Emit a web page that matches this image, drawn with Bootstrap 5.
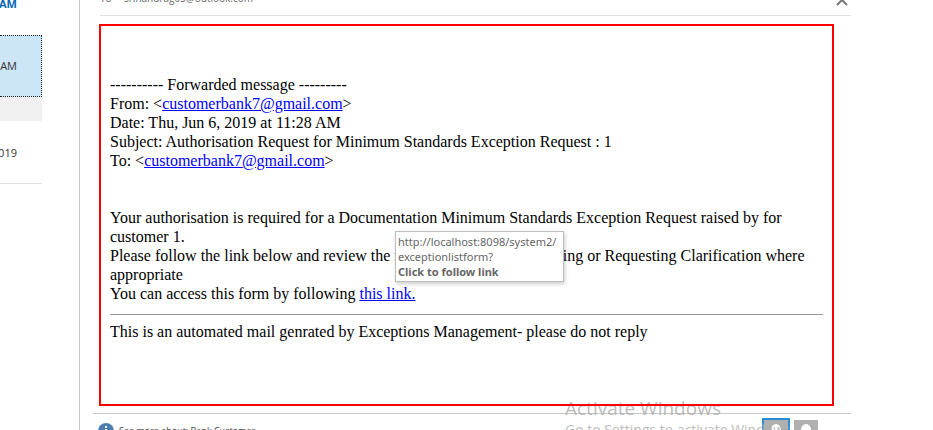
<!DOCTYPE html>
<html lang="en">
<head>
<meta charset="utf-8">
<meta name="viewport" content="width=device-width, initial-scale=1">
<title>Mail</title>
<link href="https://cdn.jsdelivr.net/npm/bootstrap@5.3.0/dist/css/bootstrap.min.css" rel="stylesheet">
<style>
body { font-family: "Open Sans", "Noto Sans", sans-serif; font-size: 11px; line-height: 15px; color: #444; background: #fff; }
.mail-list { width: 42px; margin-right: 37px; }
.mail-item { padding-right: 25px; color: #333; }
.item-unread { height: 35px; color: #0067b8; font-weight: 700; line-height: 8px; }
.item-selected { height: 62px; background: #cde6f7; border: 1px dotted #222; border-left: 0; padding: 0 24px 2px 0; }
.item-group { height: 24px; background: #f0f0f0; }
.item-older { height: 63px; border-bottom: 1px solid #e1e1e1; }
.reading-pane { border-left: 1px solid #c8c8c8; padding: 0 82px 0 13px; }
.mail-head { height: 16px; margin-left: 7px; margin-bottom: 8px; padding-bottom: 9px; border-bottom: 1px solid #e1e1e1; color: #666; font-size: 10px; }
.mail-head-label { width: 24px; }
.collapse-btn { height: 12px; margin-right: 3px; }
.message { margin: 0 17px 7px 6px; padding: 49px 9px 63px; border: 2px solid red; z-index: 2; font-family: "Liberation Serif", "Times New Roman", serif; font-size: 16px; line-height: 19px; color: #000; }
.message a { color: #00f; }
.message hr { margin: 11px 0 7px; border-top: 1px solid #999; opacity: 1; }
.link-tip { left: 294px; top: 205px; width: 169px; padding: 2px; border: 1px solid #bebebe; background: #fff; color: #666; font-family: "Noto Sans", "Open Sans", sans-serif; font-size: 11px; line-height: 15px; box-shadow: 1px 2px 4px #0003; }
.people-pane { height: 17px; border-top: 1px solid #c8c8c8; padding-left: 5px; font-size: 9px; line-height: 12px; }
.people-info { margin-top: 9px; gap: 5px; }
.people-text { margin-top: 2px; }
.avatar { width: 24px; height: 24px; background: #b0b0b0; margin-top: 6px; }
.avatar-on { width: 28px; height: 28px; border: 2px solid #2a8dd4; margin-top: 4px; }
.people-btns { margin-right: 5px; gap: 4px; }
.people-more { margin: 15px 0 0 14px; }
.watermark { left: 565px; top: 396px; color: #aaaaaacc; z-index: 1; pointer-events: none; }
.watermark-title { font-size: 19px; line-height: 24px; }
.watermark-text { font-size: 14px; line-height: 20px; }
</style>
<script src="https://cdn.jsdelivr.net/npm/bootstrap@5.3.0/dist/js/bootstrap.bundle.min.js"></script>
</head>
<body class="vh-100 overflow-hidden position-relative">
<div class="d-flex h-100 overflow-hidden">
  <aside class="mail-list flex-shrink-0 overflow-hidden" aria-label="Messages">
    <div class="mail-item item-unread d-flex justify-content-end">AM</div>
    <div class="mail-item item-selected d-flex justify-content-end align-items-center">AM</div>
    <div class="item-group"></div>
    <div class="mail-item item-older d-flex justify-content-end align-items-center">2019</div>
  </aside>
  <main class="reading-pane flex-grow-1 h-100">
    <header class="mail-head d-flex align-items-end">
      <span class="mail-head-label">To</span>
      <span class="flex-grow-1">srinandrag05@outlook.com</span>
      <button type="button" class="collapse-btn btn p-0 border-0 d-flex" aria-label="Collapse header"><svg width="12" height="12" viewBox="0 0 12 12"><path d="M1 11L6 6L11 11" fill="none" stroke="#777" stroke-width="2"/></svg></button>
    </header>
    <article class="message position-relative">
      <div>---------- Forwarded message ---------</div>
      <div>From: &lt;<a href="#">customerbank7@gmail.com</a>&gt;</div>
      <div>Date: Thu, Jun 6, 2019 at 11:28 AM</div>
      <div>Subject: Authorisation Request for Minimum Standards Exception Request : 1</div>
      <div>To: &lt;<a href="#">customerbank7@gmail.com</a>&gt;</div>
      <br><br>
      <div>Your authorisation is required for a Documentation Minimum Standards Exception Request raised by for customer 1.</div>
      <div>Please follow the link below and review the request for either Authorising or Requesting Clarification where appropriate</div>
      <div>You can access this form by following <a href="#">this link.</a></div>
      <hr>
      <div>This is an automated mail genrated by Exceptions Management- please do not reply</div>
      <div class="link-tip position-absolute" role="tooltip">http://localhost:8098/system2/<br>exceptionlistform?<br><b>Click to follow link</b></div>
    </article>
    <footer class="people-pane d-flex overflow-hidden align-items-start">
      <div class="people-info d-flex flex-grow-1">
        <svg width="16" height="16" viewBox="0 0 16 16" aria-hidden="true"><circle cx="8" cy="8" r="8" fill="#4a7eb5"/><path d="M8 3v2M8 6v7" stroke="#fff" stroke-width="2"/></svg>
        <span class="people-text">See more about: Bank Customer.</span>
      </div>
      <div class="people-btns d-flex">
        <button type="button" class="avatar avatar-on p-0 d-flex" aria-label="Sender"><svg width="24" height="24" viewBox="0 0 24 24"><ellipse cx="12" cy="10" rx="5" ry="6" fill="#fff"/><path d="M3 24q0-9 9-9t9 9" fill="#fff"/></svg></button>
        <button type="button" class="avatar border-0 p-0 d-flex" aria-label="Recipient"><svg width="24" height="24" viewBox="0 0 24 24"><ellipse cx="12" cy="10" rx="5" ry="6" fill="#fff"/><path d="M3 24q0-9 9-9t9 9" fill="#fff"/></svg></button>
        <button type="button" class="people-more btn p-0 border-0 d-flex" aria-label="Expand"><svg width="10" height="6" viewBox="0 0 10 6"><path d="M1 5L5 1L9 5" fill="none" stroke="#777"/></svg></button>
      </div>
    </footer>
  </main>
</div>
<div class="watermark position-absolute text-nowrap" aria-hidden="true">
  <div class="watermark-title">Activate Windows</div>
  <div class="watermark-text">Go to Settings to activate Windows.</div>
</div>
</body>
</html>
